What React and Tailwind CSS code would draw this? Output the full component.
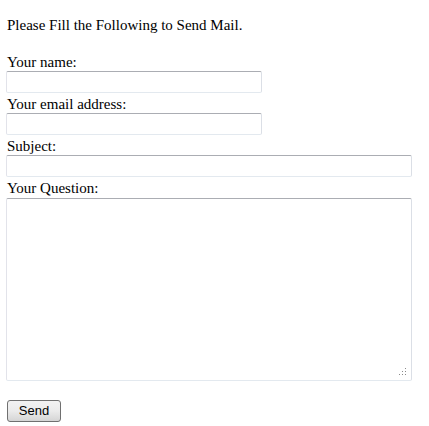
import React from 'react';

const fieldBorder =
  'border border-t-[#abadb3] border-l-[#e2e3ea] border-r-[#dbdfe6] border-b-[#e3e9ef] rounded-[2px] bg-white outline-none';

const Label = ({ children }) => (
  <div className="h-[20px] pt-[3px] leading-[17px]">{children}</div>
);

const ResizeGrip = () => (
  <svg className="absolute right-[5px] bottom-[5px]" width="8" height="8" viewBox="0 0 8 8">
    <rect x="6" y="0" width="1" height="1" fill="#8a8a8a" />
    <rect x="3" y="3" width="1" height="1" fill="#8a8a8a" />
    <rect x="6" y="3" width="1" height="1" fill="#8a8a8a" />
    <rect x="0" y="6" width="1" height="1" fill="#8a8a8a" />
    <rect x="3" y="6" width="1" height="1" fill="#8a8a8a" />
    <rect x="6" y="6" width="1" height="1" fill="#8a8a8a" />
  </svg>
);

export default function App() {
  return (
    <div className="min-h-[426px] bg-white text-black text-[15px] pl-[6px] font-['Liberation_Serif',serif]">
      <p className="pt-[17px] pl-[1px] leading-[17px]">Please Fill the Following to Send Mail.</p>

      <div className="mt-[17px] pl-[1px]">
        <Label>Your name:</Label>
      </div>
      <input type="text" className={`block w-[256px] h-[22px] ${fieldBorder}`} />

      <div className="pl-[1px]">
        <Label>Your email address:</Label>
      </div>
      <input type="text" className={`block w-[256px] h-[22px] ${fieldBorder}`} />

      <div className="pl-[1px]">
        <Label>Subject:</Label>
      </div>
      <input type="text" className={`block w-[406px] h-[22px] ${fieldBorder}`} />

      <div className="pl-[1px] h-[21px]">
        <Label>Your Question:</Label>
      </div>
      <div className="relative w-[406px] h-[183px]">
        <textarea className={`block w-full h-full resize-none ${fieldBorder}`} />
        <ResizeGrip />
      </div>

      <div className="mt-[18px] pl-[1px]">
        <button
          type="button"
          className="w-[54px] h-[22px] border border-[#707070] rounded-[3px] bg-gradient-to-b from-[#f2f2f2] via-[#ebebeb] to-[#d5d5d5] text-[13px] leading-[20px] text-black font-['Liberation_Sans',Arial,sans-serif]"
        >
          Send
        </button>
      </div>
    </div>
  );
}
